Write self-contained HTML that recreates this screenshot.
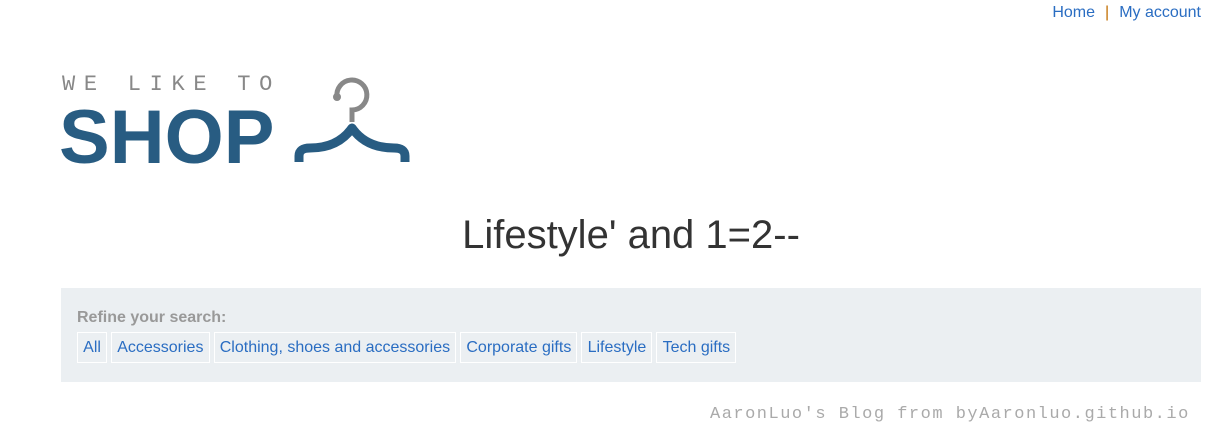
<!DOCTYPE html>
<html><head><style>
body{margin:0;width:1214px;height:441px;background:#fff;font-family:"Liberation Sans",sans-serif;position:relative;overflow:hidden}
a{color:#2a6dc2;text-decoration:none}
.top{position:absolute;right:13px;top:4px;font-size:16px;color:#333}
.top span{color:#c26d00;margin:0 10px}
.we{position:absolute;left:62px;top:72px;font-family:"Liberation Mono",monospace;font-size:22px;letter-spacing:8.7px;color:#888}
.shop{position:absolute;left:59px;top:94px;font-weight:bold;font-size:76px;color:#285c82;letter-spacing:0px}
h1{position:absolute;left:0;width:1262px;text-align:center;top:213px;margin:0;font-weight:normal;font-size:40px;color:#333}
.box{position:absolute;left:61px;top:288px;width:1140px;height:94px;background:#ebeff2}
.ref{position:absolute;left:16px;top:21px;font-weight:bold;font-size:16px;color:#999}
.tags{position:absolute;left:16px;top:44px;display:flex;gap:4px}
.tags a{border:1px solid #fff;padding:0 5.15px;height:29px;line-height:29px;font-size:16px}
.foot{position:absolute;left:710px;top:405px;font-family:"Liberation Mono",monospace;font-size:17px;letter-spacing:1.5px;color:#aaa}
</style></head><body>
<div class="top"><a>Home</a><span>|</span><a>My account</a></div>
<div class="we">WE LIKE TO</div>
<div class="shop">SHOP</div>
<svg style="position:absolute;left:290px;top:70px" width="130" height="100">
<path d="M47 27 A15 15 0 1 1 62 40 L62 52" fill="none" stroke="#888" stroke-width="5"/>
<circle cx="47" cy="27" r="4" fill="#888"/>
<path d="M9 92 L9 86 Q9 78 20 78 Q48 78 62 58 Q76 78 104 78 Q115 78 115 86 L115 92" fill="none" stroke="#285c82" stroke-width="9" stroke-linejoin="round"/>
</svg>
<h1>Lifestyle' and 1=2--</h1>
<div class="box"><div class="ref">Refine your search:</div>
<div class="tags"><a>All</a><a>Accessories</a><a>Clothing, shoes and accessories</a><a>Corporate gifts</a><a>Lifestyle</a><a>Tech gifts</a></div></div>
<div class="foot">AaronLuo's Blog from byAaronluo.github.io</div>
</body></html>
